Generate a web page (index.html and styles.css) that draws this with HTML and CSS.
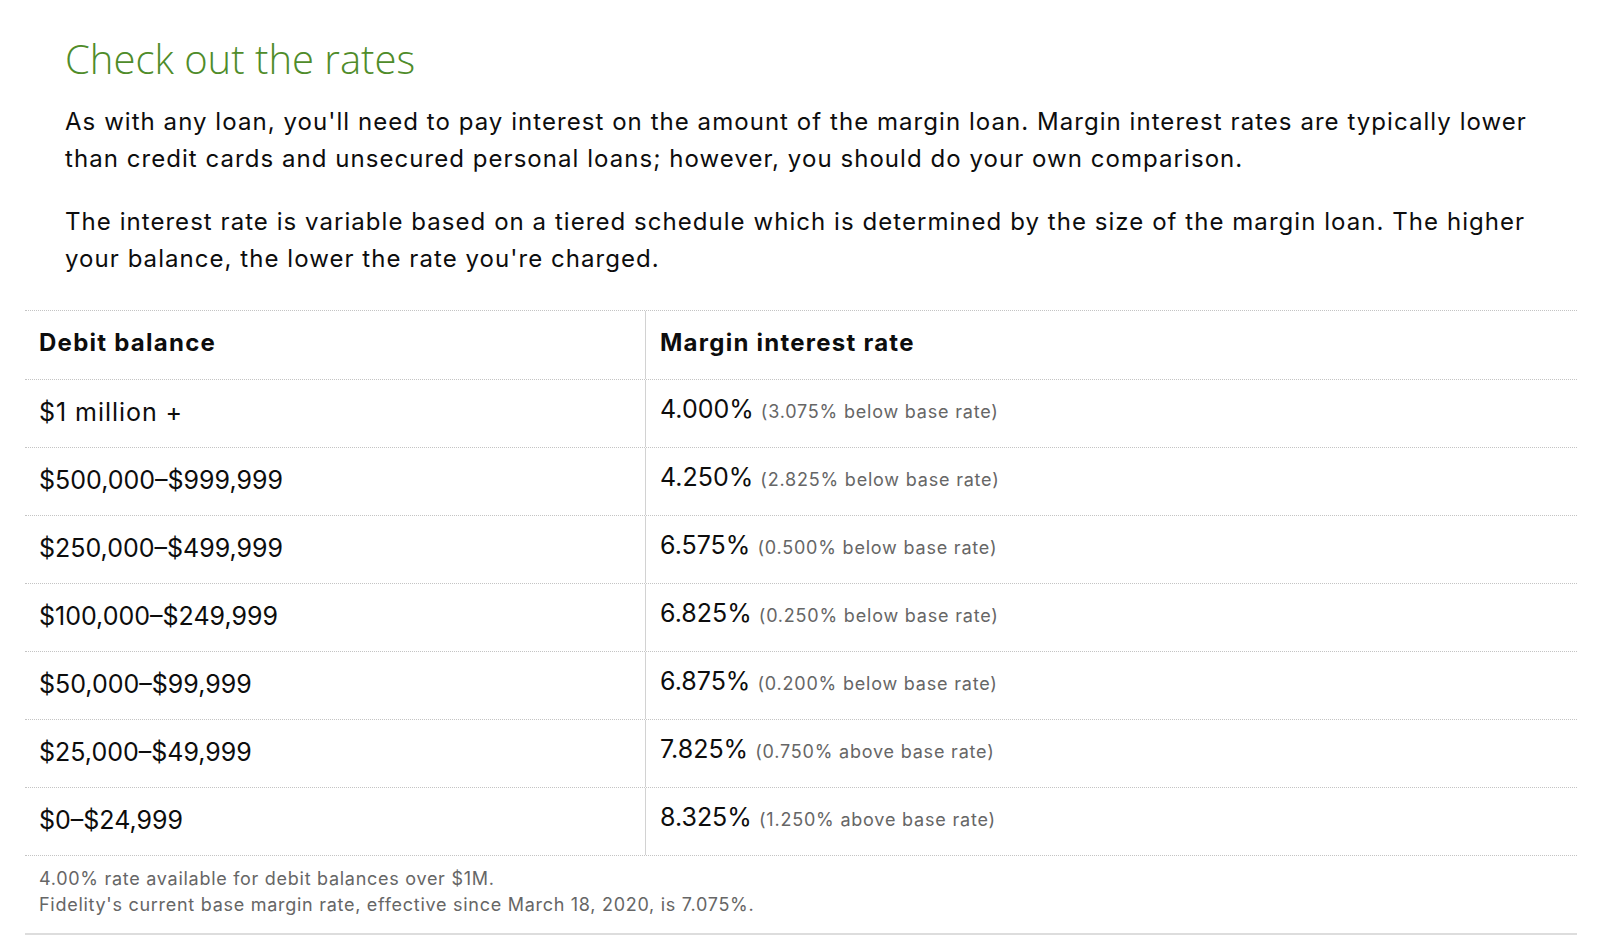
FILE: index.html
```html
<!DOCTYPE html>
<html lang="en">
<head>
<meta charset="utf-8">
<title>Check out the rates</title>
<link rel="stylesheet" href="styles.css">
</head>
<body>
<section class="rates">
  <div class="intro">
    <h2 class="title">Check out the rates</h2>
    <p class="copy">As with any loan, you'll need to pay interest on the amount of the margin loan. Margin interest rates are typically lower than credit cards and unsecured personal loans; however, you should do your own comparison.</p>
    <p class="copy">The interest rate is variable based on a tiered schedule which is determined by the size of the margin loan. The higher your balance, the lower the rate you're charged.</p>
  </div>
  <div class="table">
    <div class="row head">
      <div class="cell bal">Debit balance</div>
      <div class="cell rate">Margin interest rate</div>
    </div>
    <div class="row">
      <div class="cell bal words">$1 million +</div>
      <div class="cell rate">4.000% <span class="note">(3.075% below base rate)</span></div>
    </div>
    <div class="row">
      <div class="cell bal">$500,000–$999,999</div>
      <div class="cell rate">4.250% <span class="note">(2.825% below base rate)</span></div>
    </div>
    <div class="row">
      <div class="cell bal">$250,000–$499,999</div>
      <div class="cell rate">6.575% <span class="note">(0.500% below base rate)</span></div>
    </div>
    <div class="row">
      <div class="cell bal">$100,000–$249,999</div>
      <div class="cell rate">6.825% <span class="note">(0.250% below base rate)</span></div>
    </div>
    <div class="row">
      <div class="cell bal">$50,000–$99,999</div>
      <div class="cell rate">6.875% <span class="note">(0.200% below base rate)</span></div>
    </div>
    <div class="row">
      <div class="cell bal">$25,000–$49,999</div>
      <div class="cell rate">7.825% <span class="note">(0.750% above base rate)</span></div>
    </div>
    <div class="row">
      <div class="cell bal">$0–$24,999</div>
      <div class="cell rate">8.325% <span class="note">(1.250% above base rate)</span></div>
    </div>
  </div>
  <div class="footnote">
    <p>4.00% rate available for debit balances over $1M.</p>
    <p>Fidelity's current base margin rate, effective since March 18, 2020, is 7.075%.</p>
  </div>
</section>
</body>
</html>
```

FILE: styles.css
```css
html, body {
  margin: 0;
  padding: 0;
  background: #fff;
}

body {
  font-family: Inter, "Open Sans", Arial, sans-serif;
  color: #0d0d0d;
}

.rates {
  padding: 35px 23px 0 25px;
}

.intro {
  padding: 0 35px 0 40px;
}

.title {
  margin: 0;
  font-family: "Open Sans", Lato, sans-serif;
  font-size: 40px;
  line-height: 48px;
  font-weight: 300;
  color: #4f8c2a;
}

.copy {
  margin: 20px 0 0;
  font-size: 24px;
  line-height: 37px;
  letter-spacing: 1.05px;
}

.copy + .copy {
  margin-top: 26px;
}

.table {
  margin-top: 33px;
  border-top: 1px dotted #c4c4c4;
}

.row {
  display: grid;
  grid-template-columns: 620px 1fr;
  border-bottom: 1px dotted #c4c4c4;
}

.cell {
  height: 67px;
  box-sizing: border-box;
  font-size: 25px;
  line-height: 30px;
  padding: 17px 14px 0;
}

.cell.words {
  letter-spacing: 0.95px;
}

.cell.rate {
  border-left: 1px solid #d2d2d2;
  padding: 14px 14px 0;
}

.head .cell {
  height: 68px;
  font-size: 24px;
  font-weight: 700;
  letter-spacing: 1.25px;
  padding-top: 17px;
}

.note {
  font-size: 18px;
  letter-spacing: 0.8px;
  color: #666;
}

.footnote {
  padding: 10px 14px 15px;
  border-bottom: 2px solid #ddd;
  font-size: 18px;
  line-height: 26px;
  letter-spacing: 0.72px;
  color: #666;
}

.footnote p {
  margin: 0;
}
```
